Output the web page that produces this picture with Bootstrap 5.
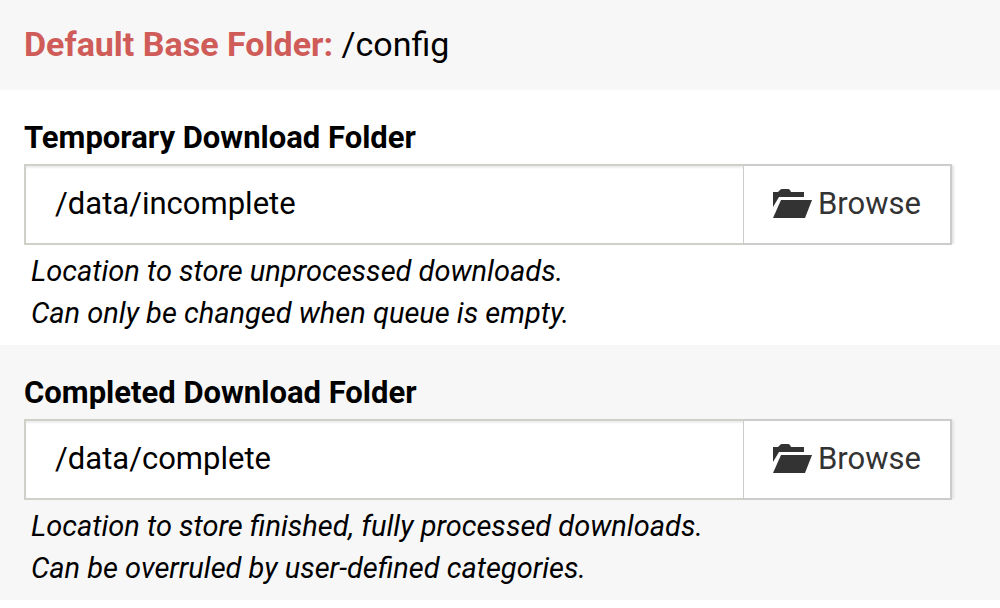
<!DOCTYPE html>
<html lang="en">
<head>
<meta charset="utf-8">
<meta name="viewport" content="width=device-width, initial-scale=1">
<title>Folders</title>
<link href="https://cdn.jsdelivr.net/npm/bootstrap@5.3.0/dist/css/bootstrap.min.css" rel="stylesheet">
<style>
  body { font-family: Roboto, sans-serif; color: #000; background: #fff; }
  .band { padding: 0 48px 0 24px; }
  .band-shaded { background: #f7f7f7; }
  .base-folder { font-size: 34px; line-height: 40px; padding-top: 24px; padding-bottom: 26px; }
  .base-folder strong { color: #cf5c58; }
  .folder-setting { padding-top: 28px; padding-bottom: 10px; }
  .folder-label { font-size: 31px; line-height: 40px; margin-bottom: 6px; }
  .folder-field { height: 81px; box-shadow: 3px 0 2px -1px #e4e4e4; }
  .folder-field .form-control { font-size: 31px; color: #000; border: 2px solid #d0d0c8; border-right-width: 0; padding: 0 29px; box-shadow: inset 0 2px 2px #eee; }
  .folder-field .btn { width: 209px; font-size: 31px; color: #333; background: #fff; border: 2px solid #ccc; border-left-width: 1px; padding: 0; gap: 6px; }
  .folder-field .btn svg { width: 39px; height: 32px; }
  .folder-help { font-size: 29px; line-height: 42px; padding: 5px 7px 1px; font-style: italic; }
</style>
</head>
<body>
<main>
  <section class="band band-shaded base-folder"><strong>Default Base Folder:</strong> /config</section>
  <section class="band folder-setting">
    <label class="folder-label d-block fw-bold" for="temporary">Temporary Download Folder</label>
    <div class="input-group folder-field">
      <input class="form-control rounded-0" type="text" id="temporary" value="/data/incomplete" aria-describedby="temporary-help">
      <button class="btn rounded-0 d-flex align-items-center justify-content-center" type="button">
        <svg viewBox="0 0 39 32" fill="currentColor" aria-hidden="true"><path d="M0 3h5l2-2q1-1 2-1h6q1 0 2 1l1 2h13v5H6L0 18z"/><path d="M8 11h31l-7 18H0z"/></svg>
        <span>Browse</span>
      </button>
    </div>
    <p class="folder-help mb-0" id="temporary-help">Location to store unprocessed downloads.<br>Can only be changed when queue is empty.</p>
  </section>
  <section class="band band-shaded folder-setting">
    <label class="folder-label d-block fw-bold" for="completed">Completed Download Folder</label>
    <div class="input-group folder-field">
      <input class="form-control rounded-0" type="text" id="completed" value="/data/complete" aria-describedby="completed-help">
      <button class="btn rounded-0 d-flex align-items-center justify-content-center" type="button">
        <svg viewBox="0 0 39 32" fill="currentColor" aria-hidden="true"><path d="M0 3h5l2-2q1-1 2-1h6q1 0 2 1l1 2h13v5H6L0 18z"/><path d="M8 11h31l-7 18H0z"/></svg>
        <span>Browse</span>
      </button>
    </div>
    <p class="folder-help mb-0" id="completed-help">Location to store finished, fully processed downloads.<br>Can be overruled by user-defined categories.</p>
  </section>
</main>
<script src="https://cdn.jsdelivr.net/npm/bootstrap@5.3.0/dist/js/bootstrap.bundle.min.js"></script>
</body>
</html>
